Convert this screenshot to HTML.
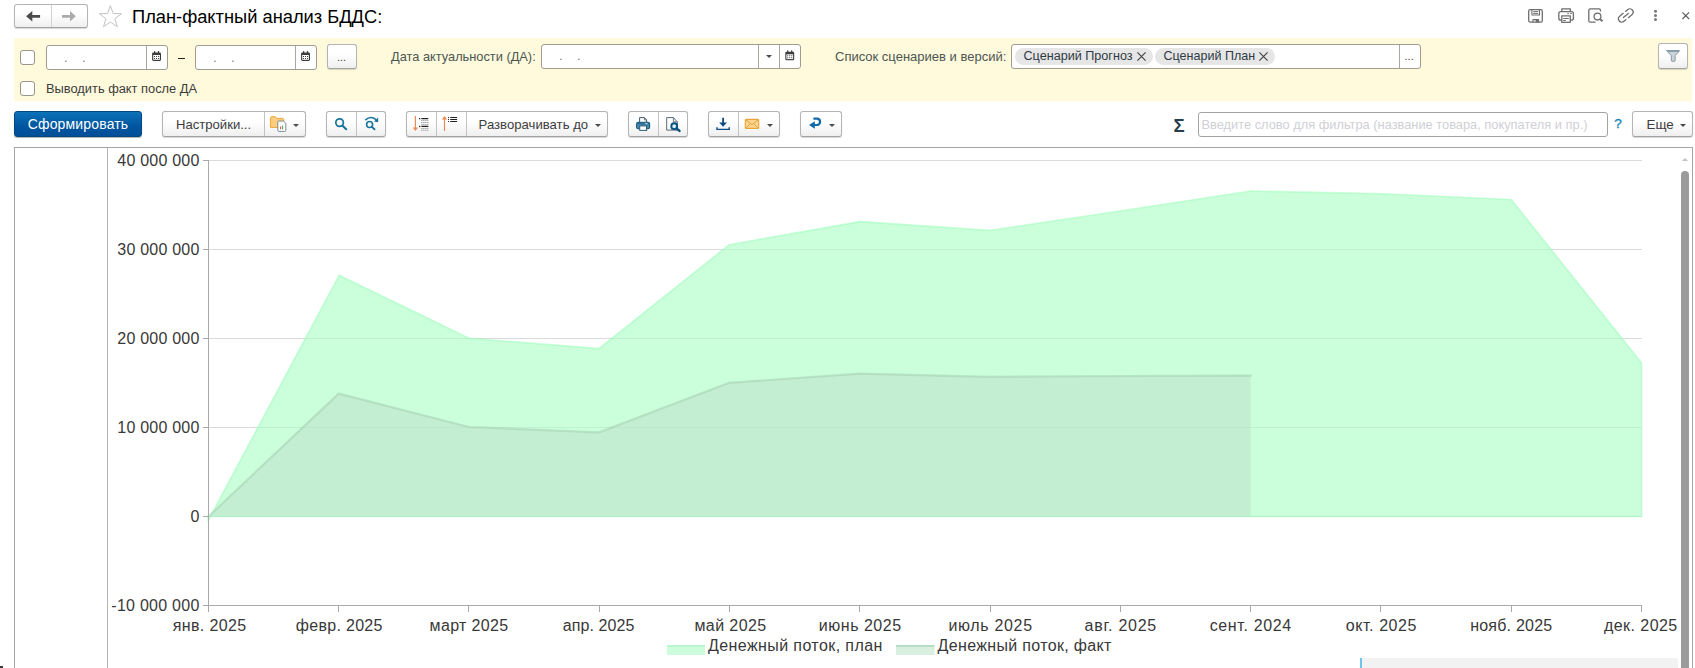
<!DOCTYPE html>
<html lang="ru">
<head>
<meta charset="utf-8">
<title>План-фактный анализ БДДС</title>
<style>
*{box-sizing:border-box;margin:0;padding:0}
html,body{width:1695px;height:668px;overflow:hidden;background:#fff}
body{position:relative;font-family:"Liberation Sans",Arial,sans-serif;font-size:13px;color:#333}
.abs{position:absolute}
.btn{position:absolute;border:1px solid #b4b4b4;border-radius:3px;background:linear-gradient(#ffffff 40%,#efefef);box-shadow:0 1px 1px rgba(0,0,0,.16);border-bottom-color:#a2a2a2;color:#3c3c3c;font-size:13px;white-space:nowrap}
.btn .sep{position:absolute;top:0;bottom:0;width:1px;background:#c2c2c2}
.inp{position:absolute;border:1px solid #a19c92;border-radius:3px;background:#fff}
.inp.w{border-color:#a3a3a3}
.inp .sep{position:absolute;top:0;bottom:0;width:1px;background:#aaa69e}
.lbl{position:absolute;white-space:nowrap;color:#4c5654;font-size:13px;line-height:16px}
.dots{position:absolute;white-space:nowrap;color:#7d7d7d;font-size:13px;line-height:16px}
.cb{position:absolute;width:15px;height:15px;border:1px solid #9a958b;border-radius:3px;background:#fff}
.tag{position:absolute;top:3px;height:17px;border-radius:9px;background:#e6e6e6;color:#2f3a44;font-size:12.62px;line-height:17px;white-space:nowrap;padding:0 0 0 8.5px}
.ell{font-size:11px;line-height:16px;color:#3f3f3f;letter-spacing:.06px;white-space:nowrap}
.caret{position:absolute;width:0;height:0;border-left:3px solid transparent;border-right:3px solid transparent;border-top:3px solid #4a4a4a}
svg{position:absolute;overflow:visible}
</style>
</head>
<body>

<!-- ===== header ===== -->
<div class="btn" id="nav" style="left:14px;top:4px;width:74px;height:24px"><div class="sep" style="left:36px;background:#d2d2d2"></div></div>
<div class="abs" id="title" style="left:132px;top:5px;font-size:18.3px;line-height:24px;color:#000;white-space:nowrap">План-фактный анализ БДДС:</div>

<!-- ===== yellow filter band ===== -->
<div class="abs" id="band" style="left:14px;top:38px;width:1678px;height:64px;background:linear-gradient(#fffadb,#fffadb 62.6px,#fffdf0 63.4px,#fffef8)"></div>

<div class="cb" style="left:20px;top:50px"></div>
<div class="inp" style="left:46px;top:45px;width:122px;height:25px"><div class="sep" style="left:99px"></div><div class="dots" style="left:17px;top:4px">.&nbsp;&nbsp;&nbsp;&nbsp;.</div></div>
<div class="abs" style="left:178px;top:58px;width:7px;height:1px;background:#222"></div>
<div class="inp" style="left:195px;top:45px;width:122px;height:25px"><div class="sep" style="left:99px"></div><div class="dots" style="left:17px;top:4px">.&nbsp;&nbsp;&nbsp;&nbsp;.</div></div>
<div class="btn" style="left:327px;top:44px;width:30px;height:25px"><div class="abs ell" style="left:8.9px;top:4px">...</div></div>

<div class="lbl" style="left:391px;top:48.5px;font-size:12.8px">Дата актуальности (ДА):</div>
<div class="inp" style="left:541px;top:44px;width:260px;height:25px"><div class="sep" style="left:216px"></div><div class="sep" style="left:237px"></div><div class="dots" style="left:17px;top:3px">.&nbsp;&nbsp;&nbsp;&nbsp;.</div><div class="caret" style="left:224px;top:10px"></div></div>

<div class="lbl" style="left:835px;top:48.5px">Список сценариев и версий:</div>
<div class="inp" style="left:1011px;top:44px;width:410px;height:25px"><div class="sep" style="left:387px"></div>
  <div class="tag" style="left:3px;width:138px">Сценарий Прогноз</div>
  <div class="tag" style="left:143px;width:120px;font-size:12.54px">Сценарий План</div>
  <div class="abs ell" style="left:392.5px;top:3px">...</div>
</div>
<div class="btn" style="left:1658px;top:43px;width:30px;height:26px"></div>

<div class="cb" style="left:20px;top:81px"></div>
<div class="lbl" style="left:46px;top:81px;font-size:12.85px;color:#3c3c3c">Выводить факт после ДА</div>

<!-- ===== toolbar ===== -->
<div class="btn" id="go" style="left:14px;top:111px;width:128px;height:26px;background:linear-gradient(#0d72b8,#00559f 60%,#004f98);border-color:#00477f;color:#fff;font-size:14px;letter-spacing:.16px;text-align:center;line-height:24px;box-shadow:0 1px 1px rgba(0,0,0,.3)">Сформировать</div>
<div class="btn" style="left:162px;top:111px;width:144px;height:26px"><div class="sep" style="left:101px"></div><div class="lbl" style="left:13px;top:4.5px;font-size:13.1px;color:#3d3d3d">Настройки...</div><div class="caret" style="left:130px;top:12px"></div></div>
<div class="btn" style="left:326px;top:111px;width:60px;height:26px"><div class="sep" style="left:29px"></div></div>
<div class="btn" style="left:406px;top:111px;width:202px;height:26px"><div class="sep" style="left:29px"></div><div class="sep" style="left:59px"></div><div class="lbl" style="left:71.6px;top:4.5px;font-size:13.15px;color:#3d3d3d">Разворачивать до</div><div class="caret" style="left:188px;top:12px"></div></div>
<div class="btn" style="left:628px;top:111px;width:60px;height:26px"><div class="sep" style="left:29px"></div></div>
<div class="btn" style="left:708px;top:111px;width:72px;height:26px"><div class="sep" style="left:29px"></div><div class="caret" style="left:58px;top:12px"></div></div>
<div class="btn" style="left:800px;top:111px;width:42px;height:26px"><div class="caret" style="left:28px;top:12px"></div></div>

<div class="abs" style="left:1173.5px;top:113.5px;font-size:18.6px;line-height:24px;color:#263f4c;font-weight:bold">Σ</div>
<div class="inp w" style="left:1198px;top:112px;width:410px;height:25px"><div class="lbl" style="left:2.5px;top:4px;color:#cfcfd6;font-size:12.84px">Введите слово для фильтра (название товара, покупателя и пр.)</div></div>
<div class="lbl" style="left:1614.3px;top:116px;color:#1a87b8;font-size:13.6px;-webkit-text-stroke:.35px #1a87b8">?</div>
<div class="btn" style="left:1632px;top:111px;width:61px;height:26px"><div class="lbl" style="left:13.5px;top:4.5px;font-size:13.4px;color:#3d3d3d">Еще</div><div class="caret" style="left:47px;top:12px"></div></div>

<!-- ===== chart frame ===== -->
<div class="abs" id="frame" style="left:14px;top:147px;width:1679px;height:540px;border:1px solid #a5a5a5"></div>
<div class="abs" style="left:107px;top:148px;width:1px;height:520px;background:#b4b4b4"></div>

<svg id="icons" style="left:0;top:0" width="1695" height="146" viewBox="0 0 1695 146">
  <!-- nav arrows -->
  <path d="M26.1 16.3L32.3 11V14.9H40.1V17.7H32.3V21.6Z" fill="#4a4a4a"/>
  <path d="M75.8 16.3L70 11V14.9H62V17.7H70V21.6Z" fill="#ababab"/>
  <!-- star -->
  <path d="M110.4 5.6L113.2 13.5L121.5 13.7L114.9 18.7L117.3 26.8L110.4 22.0L103.5 26.8L105.9 18.7L99.3 13.7L107.6 13.5z" fill="#fff" stroke="#c3c3c3" stroke-width="1"/>

  <!-- top-right icons -->
  <g fill="none" stroke="#6e6e6e" stroke-width="1.3" stroke-linejoin="round">
    <!-- save -->
    <rect x="1528.7" y="9.7" width="13.6" height="12.5" rx="1.6"/>
    <path d="M1531.9 9.7V15H1539.5V9.7" stroke-width="1.1"/>
    <path d="M1533.2 11.6H1538.2M1533.2 13.4H1538.2" stroke-width="1"/>
    <path d="M1532.9 22.2V19.6H1538.6V22.2" stroke-width="1.1"/>
    <rect x="1535.7" y="19.8" width="2.9" height="2.4" fill="#6e6e6e" stroke="none"/>
    <!-- print -->
    <path d="M1561.8 11.6V8.8H1570.3V11.6"/>
    <rect x="1558.8" y="11.7" width="14.6" height="8.5" rx="2"/>
    <rect x="1561.8" y="15.8" width="8.5" height="6.5" fill="#fff"/>
    <path d="M1563.2 18.5H1568.8M1563.2 20.5H1565.8M1567.3 13.6H1568.9M1570.2 13.6H1571.8" stroke-width="1"/>
    <!-- preview -->
    <path d="M1600.5 11.6V10.4Q1600.5 8.9 1599 8.9H1590.3Q1588.8 8.9 1588.8 10.4V20.7Q1588.8 22.2 1590.3 22.2H1595.6"/>
    <circle cx="1597.5" cy="16.6" r="3.4"/>
    <path d="M1600 19.1L1602.5 21.2" stroke-width="1.9"/>
    <!-- link -->
    <g transform="translate(1625.8,15.5) rotate(-40)" stroke-width="1.3" stroke-linecap="round"><path d="M-0.6 -3.3H-5.2A3.3 3.3 0 0 0 -5.2 3.3H-2.6"/><path d="M0.6 3.3H5.2A3.3 3.3 0 0 0 5.2 -3.3H2.6"/><path d="M-3.2 0H3.2"/></g>
  </g>
  <g fill="#777">
    <circle cx="1655.5" cy="11.2" r="1.5"/><circle cx="1655.5" cy="15.4" r="1.5"/><circle cx="1655.5" cy="19.6" r="1.5"/>
  </g>
  <path d="M1682.4 12.3L1689.1 19M1689.1 12.3L1682.4 19" stroke="#5a5a5a" stroke-width="1.1" fill="none"/>

  <!-- calendars -->
  <g id="cal1" transform="translate(152.1,51)">
    <rect x="0" y="1.4" width="8.9" height="8.5" rx="1.3" fill="#3c3c3c"/>
    <rect x="1.1" y="4" width="6.7" height="4.8" fill="#fff"/>
    <rect x="1.9" y="0" width="1.2" height="2.6" rx=".5" fill="#3c3c3c"/><rect x="5.8" y="0" width="1.2" height="2.6" rx=".5" fill="#3c3c3c"/>
    <path d="M1.9 5H2.9V6H1.9zM3.95 5H4.95V6H3.95zM6 5H7V6H6zM1.9 6.9H2.9V7.9H1.9zM3.95 6.9H4.95V7.9H3.95zM6 6.9H7V7.9H6z" fill="#3c3c3c"/>
  </g>
  <g transform="translate(301.1,51)">
    <rect x="0" y="1.4" width="8.9" height="8.5" rx="1.3" fill="#3c3c3c"/>
    <rect x="1.1" y="4" width="6.7" height="4.8" fill="#fff"/>
    <rect x="1.9" y="0" width="1.2" height="2.6" rx=".5" fill="#3c3c3c"/><rect x="5.8" y="0" width="1.2" height="2.6" rx=".5" fill="#3c3c3c"/>
    <path d="M1.9 5H2.9V6H1.9zM3.95 5H4.95V6H3.95zM6 5H7V6H6zM1.9 6.9H2.9V7.9H1.9zM3.95 6.9H4.95V7.9H3.95zM6 6.9H7V7.9H6z" fill="#3c3c3c"/>
  </g>
  <g transform="translate(785.3,50.3)">
    <rect x="0" y="1.4" width="8.9" height="8.5" rx="1.3" fill="#3c3c3c"/>
    <rect x="1.1" y="4" width="6.7" height="4.8" fill="#fff"/>
    <rect x="1.9" y="0" width="1.2" height="2.6" rx=".5" fill="#3c3c3c"/><rect x="5.8" y="0" width="1.2" height="2.6" rx=".5" fill="#3c3c3c"/>
    <path d="M1.9 5H2.9V6H1.9zM3.95 5H4.95V6H3.95zM6 5H7V6H6zM1.9 6.9H2.9V7.9H1.9zM3.95 6.9H4.95V7.9H3.95zM6 6.9H7V7.9H6z" fill="#3c3c3c"/>
  </g>

  <!-- tag close x -->
  <g stroke="#444" stroke-width="1.15" fill="none">
    <path d="M1137.4 52.4L1145.6 60.6M1145.6 52.4L1137.4 60.6"/>
    <path d="M1259.4 52.4L1267.6 60.6M1267.6 52.4L1259.4 60.6"/>
  </g>
  <!-- funnel -->
  <path d="M1666.5 50.6H1679.7L1675.1 55.6V60.6Q1675.1 61.3 1674.3 61.3H1672.1Q1671.3 61.3 1671.3 60.6V55.6Z" fill="#cbd5d9" stroke="#8597a1" stroke-width="1" stroke-linejoin="round"/>
  <path d="M1666.6 50.7H1679.6L1678.6 51.9H1667.6Z" fill="#8a9ca6"/>

  <!-- folder + doc -->
  <path d="M270.4 127.4V118.6Q270.4 116.6 272.4 116.6H275.2L276.8 118.4H282.6Q283.8 118.4 283.8 119.6V127.4Z" fill="#fbcd7c" stroke="#eaa73c" stroke-width="1"/>
  <path d="M277.8 122Q277.8 121 278.8 121H283.4L285.8 123.4V130.4Q285.8 131.4 284.8 131.4H278.8Q277.8 131.4 277.8 130.4Z" fill="#fff" stroke="#7c8a92" stroke-width="1"/>
  <path d="M280.6 129.2V126.4" stroke="#d9534f" stroke-width="1.1"/><path d="M282.6 129.2V125.4" stroke="#4cae4c" stroke-width="1.1"/>

  <!-- magnifier -->
  <g fill="none" stroke="#17749a" stroke-linecap="round">
    <circle cx="339.6" cy="122.6" r="3.8" stroke-width="1.7"/>
    <path d="M342.6 125.8L346.2 129.2" stroke-width="2.1"/>
    <circle cx="369.6" cy="124.5" r="3" stroke-width="1.6"/>
    <path d="M371.9 126.9L374.5 129.3" stroke-width="1.9"/>
    <path d="M365.3 120.1Q370.5 115.2 376 119.6" stroke-width="1.6" stroke-linecap="butt"/>
  </g>
  <path d="M378.2 117.6V122.2L373.9 121.6Z" fill="#17749a"/>

  <!-- sort icons -->
  <g stroke="#ee8a54" stroke-width="1.2" fill="none">
    <path d="M415.4 116V129.6"/><path d="M444.5 117.6V131"/>
  </g>
  <path d="M412.8 127.4H418L415.4 131Z" fill="#ee8a54"/>
  <path d="M441.9 119.6H447.1L444.5 116Z" fill="#ee8a54"/>
  <g stroke="#222" stroke-width="1.3" fill="none">
    <path d="M421.4 118.6H428.3M421.4 126.4H428.3"/>
    <path d="M450.2 117.5H457.1M450.2 119.5H457.1M450.2 121.5H457.1" stroke-width="1"/>
  </g>
  <g fill="#222"><rect x="419" y="118" width="1.3" height="1.3"/><rect x="419" y="125.8" width="1.3" height="1.3"/>
    <rect x="448" y="117" width="1" height="1"/><rect x="448" y="119" width="1" height="1"/><rect x="448" y="121" width="1" height="1"/></g>
  <g stroke="#777" stroke-width="1" stroke-dasharray="1 1" fill="none">
    <path d="M421.4 120.6H428.3M421.4 122.5H428.3M421.4 124.4H428.3M421.4 128.4H428.3M421.4 130.3H428.3"/>
  </g>

  <!-- toolbar printer -->
  <path d="M639.6 122.4V117.6H644.4L646.6 119.9V122.4" fill="#fff" stroke="#44596a" stroke-width="1"/>
  <path d="M644.4 117.6V119.9H646.6" fill="none" stroke="#44596a" stroke-width=".8"/>
  <rect x="636.6" y="122.3" width="13" height="6.5" rx="1.6" fill="#4a89ad" stroke="#17577d" stroke-width="1.1"/>
  <rect x="637.3" y="122.9" width="11.6" height="1.5" fill="#2b6c94"/>
  <rect x="645.2" y="123.2" width="2.3" height=".9" fill="#dceff8"/>
  <rect x="639.7" y="125.9" width="6.9" height="4.5" fill="#fff" stroke="#2f5a74" stroke-width="1"/>
  <!-- toolbar preview -->
  <path d="M666.7 117.6H673.4L677.3 121.8V130.1H666.7Z" fill="#fff" stroke="#5d6770" stroke-width="1"/>
  <path d="M673.4 117.6V121.8H677.3" fill="none" stroke="#5d6770" stroke-width=".9"/>
  <circle cx="674.2" cy="126.2" r="2.9" fill="#d6f1fb" stroke="#07517f" stroke-width="1.9"/>
  <path d="M676.6 128.5L679.5 130.9" stroke="#07517f" stroke-width="2.4" stroke-linecap="round"/>
  <!-- download -->
  <path d="M723.1 117.8V124" stroke="#0f4c81" stroke-width="1.8"/>
  <path d="M719.2 122.6H727L723.1 126.8Z" fill="#0f4c81"/>
  <path d="M717 127.2V129.4H729.2V127.2" fill="none" stroke="#0f4c81" stroke-width="1.4"/>
  <!-- mail -->
  <rect x="745.3" y="119.4" width="13.4" height="9" rx="1" fill="#fcd58e" stroke="#e9a338" stroke-width="1.1"/>
  <path d="M745.6 119.8L752 124.6L758.4 119.8M745.6 128.2L750.4 123.6M758.4 128.2L753.6 123.6" fill="none" stroke="#e9a338" stroke-width="1"/>
  <!-- undo arrow -->
  <path d="M814 125H817.4A3.2 3.2 0 0 0 817.4 118.7H813.4" fill="none" stroke="#0f6aa8" stroke-width="2.2"/>
  <path d="M809 125L814.8 121.2V128.8Z" fill="#0f6aa8"/>
</svg>


<svg id="chart" style="left:0;top:0" width="1695" height="668" viewBox="0 0 1695 668" font-family="Liberation Sans, Arial, sans-serif">
  <g stroke="#dadada" stroke-width="1">
    <path d="M208 160.5H1642M208 249.5H1642M208 338.5H1642M208 427.5H1642M208 516.5H1642"/>
  </g>
  <path d="M208 521L339.2 275.2L469 338.2L599 348.6L729.2 244.7L860 221.6L990 230.4L1120 211L1251 191L1381 193.8L1511.2 199.5L1641.6 363V516.5H208z" fill="#affdc8" fill-opacity=".65" stroke="#98fdb8" stroke-opacity=".5" stroke-width="1.6" stroke-linejoin="round"/>
  <path d="M208 517L338.7 393.6L469 427L599 432.4L729.2 382.8L860 373.6L990 376.8L1120 376L1250.5 375.6V516.5H208z" fill="#bee3cc" fill-opacity=".6"/>
  <path d="M208 517L338.7 393.6L469 427L599 432.4L729.2 382.8L860 373.6L990 376.8L1120 376L1252 375.6" fill="none" stroke="#a1caae" stroke-opacity=".48" stroke-width="2.2" stroke-linejoin="round"/>
  <g stroke="#a9a9a9" stroke-width="1" fill="none">
    <path d="M208.5 160V612M203 605.5H1642"/>
    <path d="M203 160.5H208M203 249.5H208M203 338.5H208M203 427.5H208M203 516.5H208"/>
    <path d="M338.5 605V612M468.5 605V612M599.5 605V612M729.5 605V612M859.5 605V612M990.5 605V612M1120.5 605V612M1250.5 605V612M1380.5 605V612M1511.5 605V612M1641.5 605V612"/>
  </g>
  <g font-size="16" fill="#383838" text-anchor="end">
    <text x="199.3" y="166" textLength="82.0">40 000 000</text>
    <text x="199.3" y="255" textLength="82.0">30 000 000</text>
    <text x="199.3" y="344" textLength="82.0">20 000 000</text>
    <text x="199.3" y="433" textLength="82.0">10 000 000</text>
    <text x="199.3" y="522">0</text>
    <text x="199.3" y="611" textLength="88.0">-10 000 000</text>
  </g>
  <g font-size="16" fill="#383838" text-anchor="middle">
    <text x="209.45" y="631" textLength="73.2">янв. 2025</text>
    <text x="339.10" y="631" textLength="86.7">февр. 2025</text>
    <text x="468.90" y="631" textLength="78.7">март 2025</text>
    <text x="598.65" y="631" textLength="71.6">апр. 2025</text>
    <text x="730.30" y="631" textLength="71.7">май 2025</text>
    <text x="859.95" y="631" textLength="82.2">июнь 2025</text>
    <text x="990.25" y="631" textLength="83.6">июль 2025</text>
    <text x="1120.40" y="631" textLength="71.7">авг. 2025</text>
    <text x="1250.45" y="631" textLength="81.6">сент. 2024</text>
    <text x="1381.10" y="631" textLength="70.7">окт. 2025</text>
    <text x="1511.15" y="631" textLength="82.0">нояб. 2025</text>
    <text x="1640.60" y="631" textLength="73.3">дек. 2025</text>
  </g>
  <rect x="667" y="645" width="38" height="10" fill="#cdfddc"/>
  <rect x="667" y="645" width="38" height="2" fill="#b9f6cd"/>
  <rect x="896" y="645" width="38.6" height="10" fill="#d9f0e1"/>
  <rect x="896" y="645" width="38.6" height="2" fill="#b7dec5"/>
  <g font-size="16" fill="#383838">
    <text x="708" y="651" textLength="174.3">Денежный поток, план</text>
    <text x="937.6" y="651" textLength="173.8">Денежный поток, факт</text>
  </g>
</svg>


<!-- scrollbars -->
<div class="abs" style="left:1682px;top:157.5px;width:0;height:0;border-left:3px solid transparent;border-right:3px solid transparent;border-bottom:3.5px solid #c2c2c2"></div>
<div class="abs" style="left:0;top:666px;width:3px;height:2px;background:#3a3a38"></div>
<div class="abs" style="left:1681px;top:171px;width:8px;height:520px;background:#9b9b9b;border-radius:4px"></div>
<div class="abs" style="left:1360px;top:658px;width:318px;height:12px;background:#f2f2f2"></div>
<div class="abs" style="left:1360px;top:658px;width:2px;height:12px;background:#6ec4ea"></div>

</body>
</html>
